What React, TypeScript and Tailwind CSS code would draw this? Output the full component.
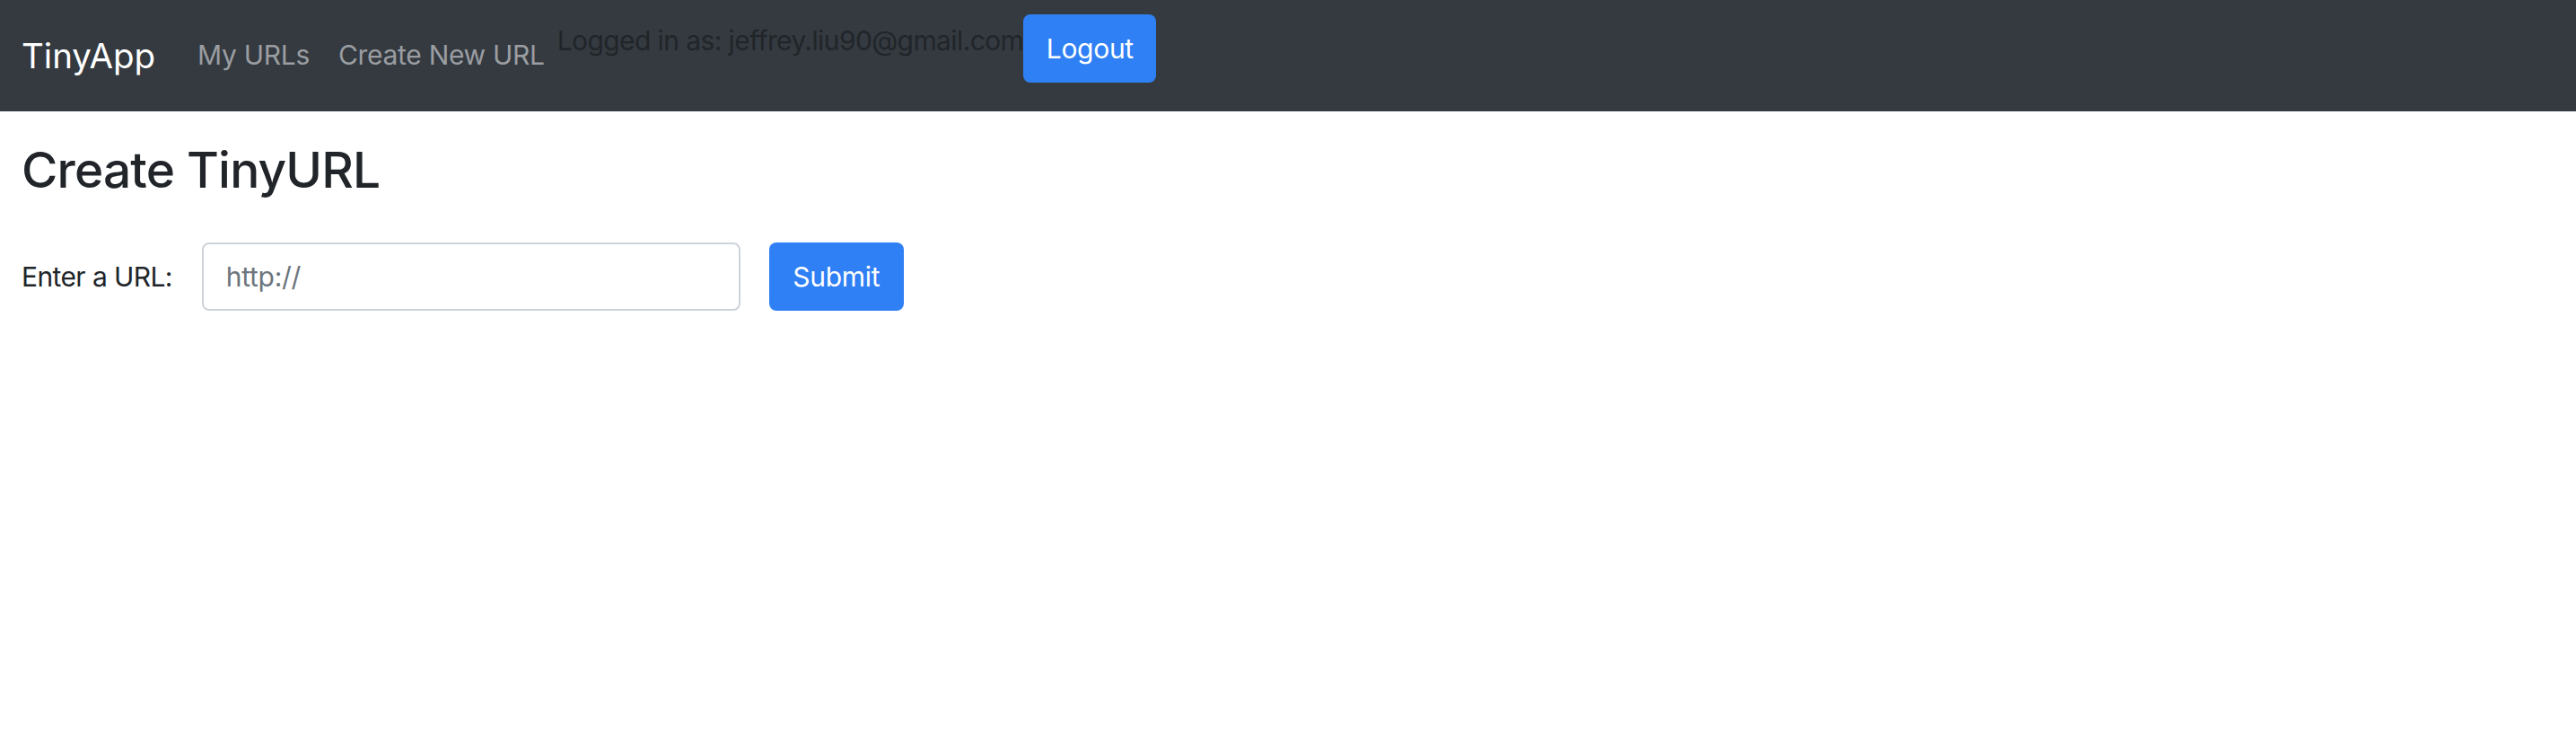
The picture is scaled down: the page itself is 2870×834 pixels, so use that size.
export default function App() {
  return (
    <div className="min-h-screen bg-white font-['Inter','Liberation_Sans',sans-serif]">
      <nav className="flex h-[124px] items-start bg-[#343a40] pl-[24px]">
        <a href="#" className="mt-[32px] mr-[31px] text-[38.5px] leading-[60px] text-white">
          TinyApp
        </a>
        <ul className="mt-[37px] flex">
          <li>
            <a href="#" className="block px-[16px] text-[30px] leading-[48px] tracking-[-0.01em] text-[#9a9da1]">
              My URLs
            </a>
          </li>
          <li>
            <a href="#" className="block px-[16px] text-[30px] leading-[48px] tracking-[-0.01em] text-[#9a9da1]">
              Create New URL
            </a>
          </li>
        </ul>
        <span className="mt-[21px] -ml-[2px] text-[30px] leading-[48px] tracking-[-0.02em] text-[#212529]">
          Logged in as: jeffrey.liu90@gmail.com
        </span>
        <button className="mt-[16px] flex h-[76px] w-[148px] items-center justify-center rounded-[8px] bg-[#2f80f5] text-[30px] leading-[48px] tracking-[-0.01em] text-white">
          Logout
        </button>
      </nav>

      <main className="pl-[24px]">
        <h1 className="mt-[33px] text-[55px] leading-[64px] font-medium tracking-[-0.015em] text-[#212529]">
          Create TinyURL
        </h1>
        <form className="mt-[49px] flex items-center" onSubmit={(e) => e.preventDefault()}>
          <label className="mr-[33px] text-[30px] leading-[48px] tracking-[-0.02em] text-[#212529]">
            Enter a URL:
          </label>
          <input
            type="text"
            placeholder="http://"
            className="h-[76px] w-[600px] rounded-[8px] border-2 border-[#ced4da] bg-white px-[25px] text-[30px] tracking-[-0.01em] text-[#495057] placeholder:text-[#6c757d] outline-none"
          />
          <button
            type="submit"
            className="ml-[32px] flex h-[76px] w-[150px] items-center justify-center rounded-[8px] bg-[#2f80f5] text-[30px] leading-[48px] tracking-[-0.01em] text-white"
          >
            Submit
          </button>
        </form>
      </main>
    </div>
  );
}
